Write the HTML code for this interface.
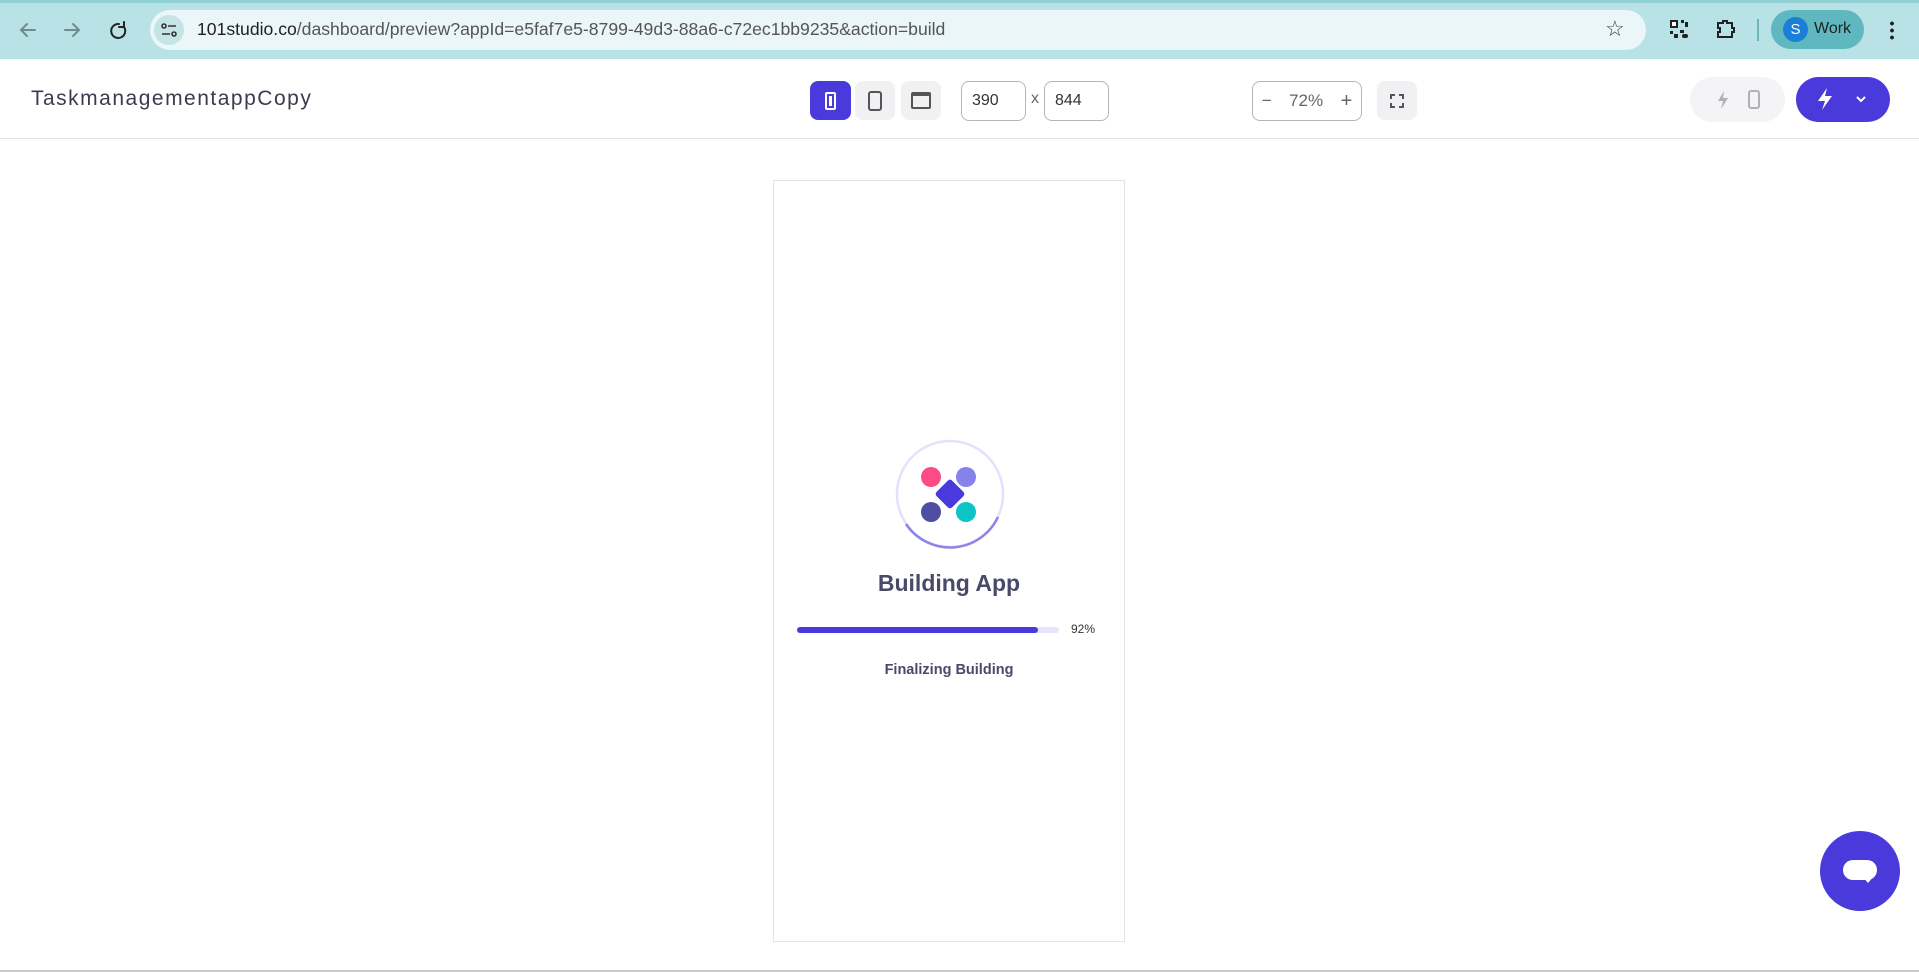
<!DOCTYPE html>
<html><head><meta charset="utf-8"><style>
*{box-sizing:border-box;margin:0;padding:0}
body{width:1919px;height:972px;position:relative;background:#fff;font-family:"Liberation Sans",sans-serif;overflow:hidden}
.abs{position:absolute}
.chrome{left:0;top:0;width:1919px;height:59px;background:#b8e2e5;border-top:3px solid #8fd0d4}
.url{left:150px;top:10px;width:1496px;height:40px;border-radius:20px;background:#eaf6f7}
.btn{border-radius:8px;background:#f1f1f4;display:flex;align-items:center;justify-content:center}
.inp{border:1px solid #b5b5bd;border-radius:8px;height:40px;font-size:16px;color:#333;padding-left:10px;line-height:38px}
</style></head><body>
<div class="abs chrome"></div>
<svg class="abs" style="left:17px;top:19px" width="120" height="22" viewBox="0 0 120 22" fill="none" stroke-width="2" stroke-linecap="round">
<path d="M18 11H4M10 5L4 11l6 6" stroke="#6e8c90"/>
<path d="M48 11h14M56 5l6 6-6 6" stroke="#6e8c90"/>
<path d="M102 5a7 7 0 1 0 5 3M107 3v5h-5" stroke="#222"/>
</svg>
<div class="abs url"></div>
<div class="abs" style="left:154px;top:15px;width:30px;height:30px;border-radius:15px;background:#c5e4e6"></div>
<svg class="abs" style="left:160px;top:21px" width="18" height="18" viewBox="0 0 18 18" fill="none" stroke="#333" stroke-width="1.6"><circle cx="4" cy="5" r="2"/><path d="M8 5h8M2 13h8"/><circle cx="14" cy="13" r="2"/></svg>
<div class="abs" style="left:197px;top:19px;font-size:17.6px;color:#1f1f1f;white-space:nowrap">101studio.co<span style="color:#555">/dashboard/preview?appId=e5faf7e5-8799-49d3-88a6-c72ec1bb9235&amp;action=build</span></div>
<div class="abs" style="left:1605px;top:16px;font-size:22px;color:#444">☆</div>
<svg class="abs" style="left:1670px;top:20px" width="19" height="19" viewBox="0 0 19 19" fill="#222"><rect x="0" y="0" width="8" height="8"/><rect x="2" y="2" width="4" height="4" fill="#fff"/><rect x="11" y="0" width="3" height="3"/><rect x="15" y="2" width="3" height="5"/><rect x="0" y="11" width="3" height="3"/><rect x="4" y="14" width="4" height="4"/><rect x="10" y="10" width="4" height="3"/><rect x="12" y="14" width="6" height="4" rx="2"/></svg>
<svg class="abs" style="left:1714px;top:18px" width="22" height="22" viewBox="0 0 22 22" fill="none" stroke="#222" stroke-width="2"><path d="M4 5h5V3h4v2h5v5h2v4h-2v5H4v-5h2v-4H4z"/></svg>
<div class="abs" style="left:1757px;top:19px;width:2px;height:22px;background:#6cb8bd"></div>
<div class="abs" style="left:1771px;top:10px;width:93px;height:39px;border-radius:20px;background:#5fb8bf"></div>
<div class="abs" style="left:1783px;top:17px;width:25px;height:25px;border-radius:13px;background:#1a7fd6;color:#fff;font-size:15px;text-align:center;line-height:25px">S</div>
<div class="abs" style="left:1814px;top:20px;font-size:16px;color:#1f1f1f">Work</div>
<div class="abs" style="left:1890px;top:20px;width:4px;height:20px;background:radial-gradient(circle,#222 1.8px,transparent 2px) 0 0/4px 7px"></div>

<div class="abs" style="left:0;top:138px;width:1919px;height:1px;background:#dedee3"></div>
<div class="abs" style="left:31px;top:87px;font-size:21px;color:#3b3b4f;letter-spacing:1.5px">TaskmanagementappCopy</div>

<div class="abs btn" style="left:810px;top:81px;width:41px;height:39px;background:#4a3adb"><div style="width:11px;height:18px;border:2px solid #fff;border-radius:2px;background:#fff;box-shadow:inset 0 0 0 2px #4a3adb"></div></div>
<div class="abs btn" style="left:855px;top:81px;width:40px;height:39px"><div style="width:14px;height:20px;border:2px solid #555;border-radius:3px"></div></div>
<div class="abs btn" style="left:901px;top:81px;width:40px;height:39px"><div style="width:20px;height:17px;border:2px solid #555;border-top-width:4px;border-radius:2px"></div></div>
<div class="abs inp" style="left:961px;top:81px;width:65px">390</div>
<div class="abs" style="left:1031px;top:90px;font-size:16px;color:#666">x</div>
<div class="abs inp" style="left:1044px;top:81px;width:65px">844</div>
<div class="abs inp" style="left:1252px;top:81px;width:110px;padding-left:0;display:flex;justify-content:space-around;color:#666;font-size:17px"><span>−</span><span>72%</span><span style="font-size:20px">+</span></div>
<div class="abs btn" style="left:1377px;top:81px;width:40px;height:39px"><svg width="14" height="14" viewBox="0 0 14 14" fill="none" stroke="#555" stroke-width="2"><path d="M1 5V1h4M9 1h4v4M13 9v4H9M5 13H1V9"/></svg></div>
<div class="abs" style="left:1690px;top:77px;width:95px;height:45px;border-radius:23px;background:#f4f4f6"></div>
<svg class="abs" style="left:1715px;top:89px" width="60" height="22" viewBox="0 0 60 22"><path d="M9 2L3 12h5l-2 8 7-11H8z" fill="#b0b0b8"/><rect x="34" y="2" width="10" height="17" rx="2" fill="none" stroke="#b0b0b8" stroke-width="2"/></svg>
<div class="abs" style="left:1796px;top:77px;width:94px;height:45px;border-radius:23px;background:#4a3adb"></div>
<svg class="abs" style="left:1814px;top:86px" width="60" height="26" viewBox="0 0 60 26"><path d="M13 2L4 15h7l-3 9 10-14h-7z" fill="#fff"/><path d="M43 11l4 4 4-4" stroke="#fff" stroke-width="2" fill="none"/></svg>

<div class="abs" style="left:773px;top:180px;width:352px;height:762px;border:1px solid #e3e4ea"></div>
<svg class="abs" style="left:890px;top:434px" width="120" height="120" viewBox="0 0 120 120">
<circle cx="60" cy="60" r="53" fill="#fff" stroke="#e4e2fb" stroke-width="2.5"/>
<path d="M16 90 A53 53 0 0 0 108 83" fill="none" stroke="#8c84e8" stroke-width="2.5"/>
<circle cx="41" cy="43" r="10" fill="#fd4b86"/><circle cx="76" cy="43" r="10" fill="#8582ec"/>
<circle cx="41" cy="78" r="10" fill="#4f4ea0"/><circle cx="76" cy="78" r="10" fill="#0cc3c5"/>
<rect x="49" y="49" width="22" height="22" rx="3" fill="#4a3adb" transform="rotate(45 60 60)"/>
</svg>
<div class="abs" style="left:773px;top:570px;width:352px;text-align:center;font-size:23px;font-weight:bold;color:#4a4a68">Building App</div>
<div class="abs" style="left:797px;top:627px;width:262px;height:6px;border-radius:3px;background:#e6e4fb"></div>
<div class="abs" style="left:797px;top:627px;width:241px;height:6px;border-radius:3px;background:#4a3adb"></div>
<div class="abs" style="left:1071px;top:622px;font-size:12px;color:#333">92%</div>
<div class="abs" style="left:773px;top:662px;width:352px;text-align:center;font-size:14.5px;font-weight:bold;color:#4a4a68">Finalizing Building</div>

<div class="abs" style="left:1820px;top:831px;width:80px;height:80px;border-radius:40px;background:#4a3adb"></div>
<div class="abs" style="left:1843px;top:860px;width:34px;height:20px;border-radius:10px;background:#fff"></div>
<div class="abs" style="left:1862px;top:876px;width:0;height:0;border-left:6px solid transparent;border-right:6px solid transparent;border-top:7px solid #fff"></div>
<div class="abs" style="left:0;top:970px;width:1919px;height:2px;background:#c9c9cc"></div>
</body></html>
